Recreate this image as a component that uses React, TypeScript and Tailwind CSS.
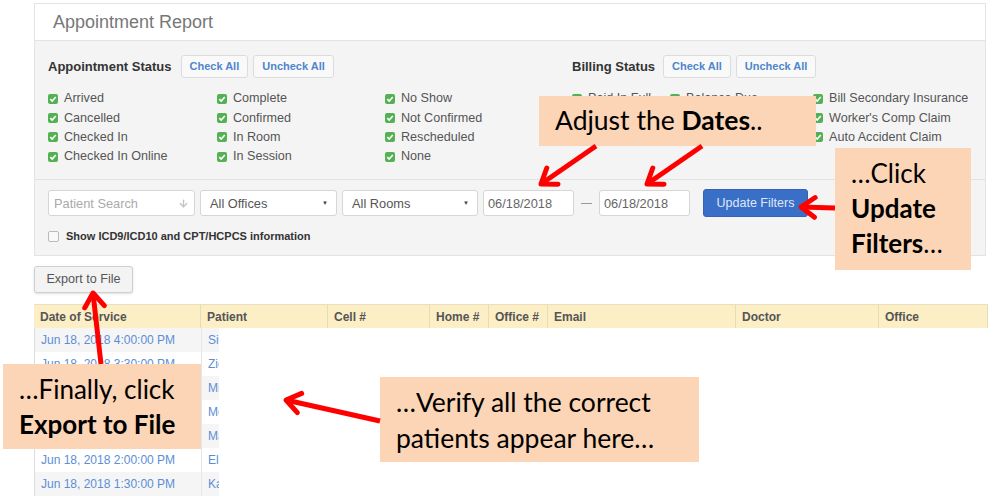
import { ArrowDown } from "lucide-react";

const appointmentCols = [
  ["Arrived", "Cancelled", "Checked In", "Checked In Online"],
  ["Complete", "Confirmed", "In Room", "In Session"],
  ["No Show", "Not Confirmed", "Rescheduled", "None"],
];

const billingCols = [
  ["Paid In Full", "Write Off", "Collections"],
  ["Balance Due", "Bill Primary Insurance", "Insurance Pending"],
  ["Bill Secondary Insurance", "Worker's Comp Claim", "Auto Accident Claim"],
];

const columns = [
  { name: "Date of Service", w: "w-[167px]" },
  { name: "Patient", w: "w-[127px]" },
  { name: "Cell #", w: "w-[102px]" },
  { name: "Home #", w: "w-[59px]" },
  { name: "Office #", w: "w-[59px]" },
  { name: "Email", w: "w-[188px]" },
  { name: "Doctor", w: "w-[143px]" },
  { name: "Office", w: "w-[109px]" },
];

const rows = [
  { date: "Jun 18, 2018 4:00:00 PM", patient: "Sienna Carter" },
  { date: "Jun 18, 2018 3:30:00 PM", patient: "Zion Miller" },
  { date: "Jun 18, 2018 3:00:00 PM", patient: "Mia Lopez" },
  { date: "Jun 18, 2018 2:45:00 PM", patient: "Megan Hall" },
  { date: "Jun 18, 2018 2:30:00 PM", patient: "Mason Reed" },
  { date: "Jun 18, 2018 2:00:00 PM", patient: "Eleanor Price" },
  { date: "Jun 18, 2018 1:30:00 PM", patient: "Kayla Brooks" },
];

const Check = ({ label }: { label: string }) => (
  <div className="flex items-center h-[19.3px] gap-[6px]">
    <span className="w-[10px] h-[10px] rounded-[2px] bg-[#53b153] flex items-center justify-center shrink-0">
      <svg width="8" height="8" viewBox="0 0 8 8">
        <path d="M1.3 4.2 L3.2 6 L6.8 2" stroke="white" strokeWidth="1.6" fill="none" />
      </svg>
    </span>
    <span className="text-[12.6px] text-[#555] whitespace-nowrap">{label}</span>
  </div>
);

const SmallButton = ({ children }: { children: string }) => (
  <button className="h-[23px] px-[8px] bg-[#f9f9f9] border border-[#dcdcdc] rounded-[3px] text-[11px] font-bold text-[#4f86cc]">
    {children}
  </button>
);

const Arrow = ({ x1, y1, x2, y2 }: { x1: number; y1: number; x2: number; y2: number }) => {
  const a = Math.atan2(y1 - y2, x1 - x2);
  const len = 17;
  const spread = 0.62;
  const p1 = [x2 + len * Math.cos(a + spread), y2 + len * Math.sin(a + spread)];
  const p2 = [x2 + len * Math.cos(a - spread), y2 + len * Math.sin(a - spread)];
  return (
    <g stroke="#ff0000" strokeWidth="5" strokeLinecap="round" strokeLinejoin="round" fill="none">
      <line x1={x1} y1={y1} x2={x2} y2={y2} strokeLinecap="butt" />
      <polyline points={`${p1[0]},${p1[1]} ${x2},${y2} ${p2[0]},${p2[1]}`} />
    </g>
  );
};

export default function App() {
  return (
    <div className="relative w-[988px] h-[497px] overflow-hidden bg-white font-['Liberation_Sans',Arial,sans-serif]">
      <div className="ml-[34px] mt-[3px] w-[952px] border border-[#e3e3e3]">
        <div className="h-[37px] flex items-center pl-[18px] bg-white border-b border-[#e3e3e3] text-[18px] text-[#777]">
          Appointment Report
        </div>
        <div className="bg-[#f4f4f4]">
          <div className="flex px-[13px] pt-[14px] pb-[13px] border-b border-[#e2e2e2]">
            <div className="w-[524px]">
              <div className="flex items-center gap-[9px] h-[23px]">
                <span className="text-[13px] font-bold text-[#333]">Appointment Status</span>
                <div className="flex gap-[5px]">
                  <SmallButton>Check All</SmallButton>
                  <SmallButton>Uncheck All</SmallButton>
                </div>
              </div>
              <div className="grid grid-cols-[169px_168px_1fr] mt-[11px]">
                {appointmentCols.map((col, i) => (
                  <div key={i}>
                    {col.map((l) => (
                      <Check key={l} label={l} />
                    ))}
                  </div>
                ))}
              </div>
            </div>
            <div className="flex-1">
              <div className="flex items-center gap-[8px] h-[23px]">
                <span className="text-[13px] font-bold text-[#333]">Billing Status</span>
                <div className="flex gap-[5px]">
                  <SmallButton>Check All</SmallButton>
                  <SmallButton>Uncheck All</SmallButton>
                </div>
              </div>
              <div className="grid grid-cols-[98px_143px_1fr] mt-[11px]">
                {billingCols.map((col, i) => (
                  <div key={i}>
                    {col.map((l) => (
                      <Check key={l} label={l} />
                    ))}
                  </div>
                ))}
              </div>
            </div>
          </div>
          <div className="px-[13px] pt-[10px] pb-[11px]">
            <div className="flex items-center h-[26px] text-[12.8px]">
              <div className="w-[147px] h-[26px] bg-white border border-[#d6d6d6] rounded-[3px] flex items-center justify-between px-[5px] text-[#aaa]">
                <span>Patient Search</span>
                <ArrowDown size={11} strokeWidth={3} className="text-[#c4c4c4]" />
              </div>
              <div className="ml-[5px] w-[137px] h-[26px] bg-white border border-[#d6d6d6] rounded-[3px] flex items-center justify-between pl-[9px] pr-[8px] text-[#555]">
                <span>All Offices</span>
                <span className="text-[6px] text-[#444]">▼</span>
              </div>
              <div className="ml-[5px] w-[136px] h-[26px] bg-white border border-[#d6d6d6] rounded-[3px] flex items-center justify-between pl-[9px] pr-[8px] text-[#555]">
                <span>All Rooms</span>
                <span className="text-[6px] text-[#444]">▼</span>
              </div>
              <div className="ml-[5px] w-[91px] h-[26px] bg-white border border-[#d6d6d6] rounded-[3px] flex items-center px-[4px] text-[#666]">
                06/18/2018
              </div>
              <div className="w-[25px] flex justify-center">
                <span className="w-[11px] h-[1px] bg-[#999]" />
              </div>
              <div className="w-[91px] h-[26px] bg-white border border-[#d6d6d6] rounded-[3px] flex items-center px-[4px] text-[#666]">
                06/18/2018
              </div>
              <button className="ml-[13px] w-[105px] h-[28px] bg-[#3a6fc8] border border-[#3463b5] rounded-[3px] text-[12.5px] text-[#dfe8f8]">
                Update Filters
              </button>
            </div>
            <div className="flex items-center gap-[7px] h-[16px] mt-[12px]">
              <span className="w-[11px] h-[11px] bg-[#f8f8f8] border border-[#bbb] rounded-[2px]" />
              <span className="text-[11px] font-bold text-[#333]">Show ICD9/ICD10 and CPT/HCPCS information</span>
            </div>
          </div>
        </div>
      </div>

      <button className="ml-[34px] mt-[10px] w-[99px] h-[27px] bg-[#f3f3f3] border border-[#cfcfcf] rounded-[3px] text-[12.6px] text-[#555] shadow-sm">
        Export to File
      </button>

      <div className="ml-[34px] mt-[11px]">
        <div className="flex w-[954px] h-[24px] bg-[#fcefc6] border-t border-[#eadfbf]">
          {columns.map((c) => (
            <div
              key={c.name}
              className={`${c.w} shrink-0 h-full flex items-center pl-[6px] border-r border-[#e9dcb4] text-[12px] font-bold text-[#555]`}
            >
              {c.name}
            </div>
          ))}
        </div>
        <div className="w-[185px] overflow-hidden border-l border-[#ddd]">
          {rows.map((r, i) => (
            <div key={r.date} className={`flex h-[24px] ${i % 2 === 0 ? "bg-[#f5f5f5]" : "bg-white"}`}>
              <div className="w-[167px] shrink-0 flex items-center pl-[6px] border-r border-[#e6e6e6] text-[12px] text-[#5b8ed5] whitespace-nowrap">
                {r.date}
              </div>
              <div className="w-[127px] shrink-0 flex items-center pl-[6px] text-[12px] text-[#5b8ed5] whitespace-nowrap">
                {r.patient}
              </div>
            </div>
          ))}
        </div>
      </div>

      <div className="absolute left-[539px] top-[96px] w-[277px] h-[50px] bg-[#fbd5b5] flex items-center pl-[16px] font-['Lato',sans-serif] text-[26.5px] text-black">
        <span>
          Adjust the <b>Dates</b>..
        </span>
      </div>
      <div className="absolute left-[835px] top-[148px] w-[136px] h-[122px] bg-[#fbd5b5] pl-[16px] pt-[8px] font-['Lato',sans-serif] text-[26px] leading-[35px] text-black">
        <div>…Click</div>
        <div className="font-bold">Update</div>
        <div>
          <b>Filters</b>…
        </div>
      </div>
      <div className="absolute left-[3px] top-[364px] w-[198px] h-[85px] bg-[#fbd5b5] pl-[16px] pt-[8px] font-['Lato',sans-serif] text-[26px] leading-[35px] text-black">
        <div>…Finally, click</div>
        <div className="font-bold">Export to File</div>
      </div>
      <div className="absolute left-[380px] top-[377px] w-[319px] h-[85px] bg-[#fbd5b5] pl-[16px] pt-[7px] font-['Lato',sans-serif] text-[26.5px] leading-[36px] text-black">
        <div>…Verify all the correct</div>
        <div>patients appear here…</div>
      </div>

      <svg className="absolute inset-0 pointer-events-none" width="988" height="497">
        <Arrow x1={596} y1={146} x2={541} y2={184} />
        <Arrow x1={702} y1={146} x2={647} y2={184} />
        <Arrow x1={835} y1={208} x2={801} y2={207} />
        <Arrow x1={101} y1={364} x2={93} y2={293} />
        <Arrow x1={380} y1={421} x2={286} y2={400} />
      </svg>
    </div>
  );
}
